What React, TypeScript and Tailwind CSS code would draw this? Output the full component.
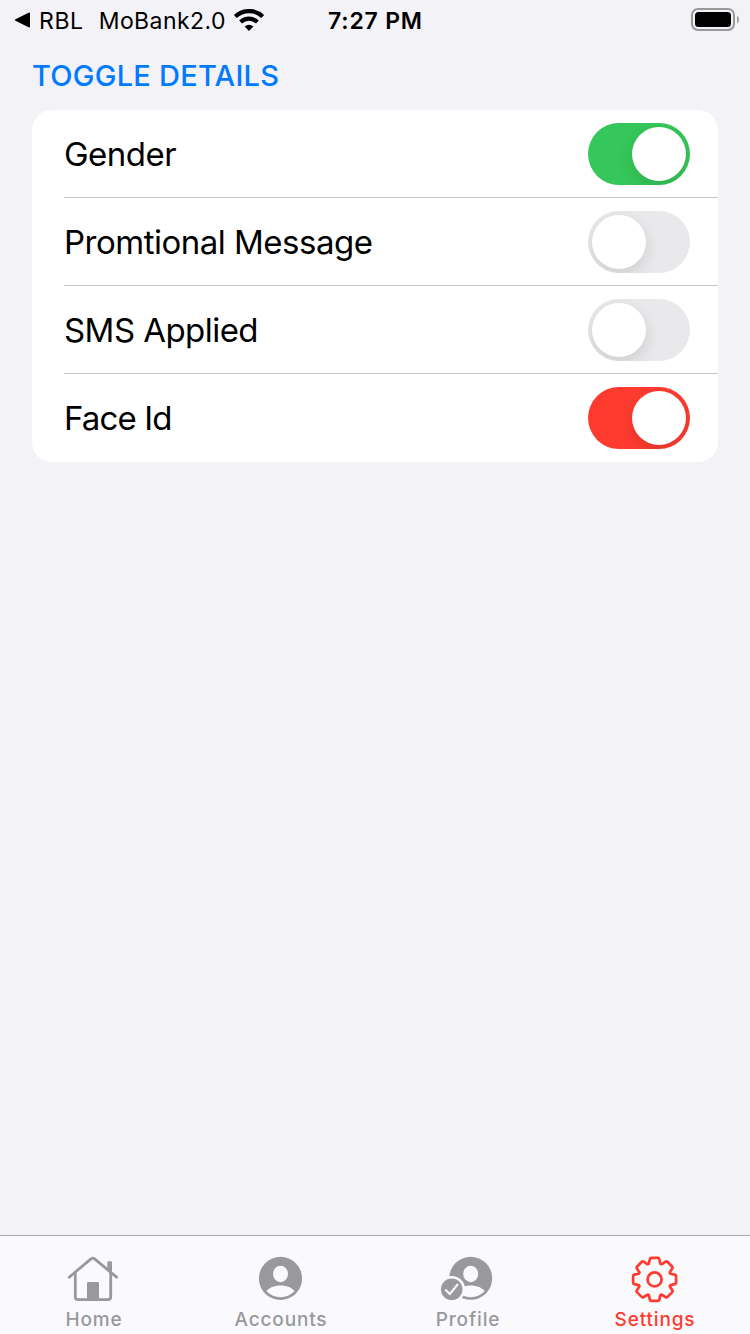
import { useState, type ReactNode } from "react";

type Row = { label: string; on: boolean; onClass: string; spacing: string };

const rows: Row[] = [
  { label: "Gender", on: true, onClass: "bg-[#35c759]", spacing: "tracking-[-0.5px]" },
  { label: "Promtional Message", on: false, onClass: "bg-[#35c759]", spacing: "tracking-[-0.5px]" },
  { label: "SMS Applied", on: false, onClass: "bg-[#35c759]", spacing: "tracking-[-0.55px]" },
  { label: "Face Id", on: true, onClass: "bg-[#ff3b30]", spacing: "tracking-[-0.85px]" },
];

function Toggle({ initial, onClass }: { initial: boolean; onClass: string }) {
  const [on, setOn] = useState(initial);
  return (
    <button
      role="switch"
      aria-checked={on}
      onClick={() => setOn(!on)}
      className={`flex h-[62px] w-[102px] items-center overflow-hidden rounded-full p-1 ${
        on ? `justify-end ${onClass}` : "justify-start bg-[#e9e9eb]"
      }`}
    >
      <span className="size-[54px] rounded-full bg-white shadow-[0_6px_16px_rgba(0,0,0,0.12)]" />
    </button>
  );
}

function HomeIcon() {
  return (
    <svg className="shrink-0" width="61" height="55" viewBox="0 0 61 55" fill="none" stroke="currentColor" strokeLinecap="round" strokeLinejoin="round">
      <path d="M6.2 27.2 28 8.9Q29.8 7.4 31.6 8.9L53.6 27.2" strokeWidth="2.8" />
      <path d="M12.3 23V46.7Q12.3 49.6 15.2 49.6H44.8Q47.7 49.6 47.7 46.7V23" strokeWidth="2.8" />
      <path d="M44.3 19V12.4Q44.3 11.2 45.5 11.2H47.8Q49 11.2 49 12.4V23Z" fill="currentColor" stroke="none" />
      <path d="M24 50V33.2Q24 32 25.2 32H34.8Q36 32 36 33.2V50Z" fill="currentColor" stroke="none" />
    </svg>
  );
}

function AccountsIcon() {
  return (
    <svg className="shrink-0" width="61" height="55" viewBox="0 0 61 55" fill="currentColor">
      <circle cx="30.5" cy="28.4" r="21.6" />
      <ellipse cx="30.5" cy="24" rx="7.5" ry="8.3" fill="#fafafd" />
      <path d="M16.5 41.3C18.7 37.6 24 35.4 30.5 35.4S42.3 37.6 44.5 41.3C40.7 45.2 35.8 47.2 30.5 47.2S20.3 45.2 16.5 41.3Z" fill="#fafafd" />
    </svg>
  );
}

function ProfileIcon() {
  return (
    <svg className="shrink-0" width="61" height="55" viewBox="0 0 61 55" fill="currentColor">
      <circle cx="33.7" cy="28.3" r="21.5" />
      <ellipse cx="33.7" cy="24" rx="7.5" ry="8.3" fill="#fafafd" />
      <path d="M20 41.3C21.9 37.6 27.2 35.4 33.7 35.4S45.5 37.6 47.7 41.3C43.9 45.2 39 47.2 33.7 47.2C30.8 47.2 28.4 46.7 26 45.6Z" fill="#fafafd" />
      <circle cx="14.7" cy="39.3" r="13.4" fill="#fafafd" />
      <circle cx="14.7" cy="39.3" r="10.8" />
      <path d="M9 40.2 12.8 44.1 20.4 34.6" fill="none" stroke="#fafafd" strokeWidth="2.2" strokeLinecap="round" strokeLinejoin="round" />
    </svg>
  );
}

const toothPoints = [
  [-5.7, -15.7],
  [-4.5, -21.5],
  [4.5, -21.5],
  [5.7, -15.7],
];

const gearCorners = Array.from({ length: 8 }, (_, i) => {
  const a = (i * Math.PI) / 4;
  return toothPoints.map(([x, y]) => [x * Math.cos(a) - y * Math.sin(a), x * Math.sin(a) + y * Math.cos(a)]);
}).flat();

// Rounds each corner by starting and ending a quadratic curve a short way along its edges.
const gearPath =
  gearCorners
    .map((p, i) => {
      const n = gearCorners.length;
      const toward = (q: number[]) => {
        const d = Math.hypot(q[0] - p[0], q[1] - p[1]);
        return `${(p[0] + ((q[0] - p[0]) * 1.3) / d).toFixed(2)} ${(p[1] + ((q[1] - p[1]) * 1.3) / d).toFixed(2)}`;
      };
      const start = toward(gearCorners[(i + n - 1) % n]);
      const end = toward(gearCorners[(i + 1) % n]);
      return `${i === 0 ? "M" : "L"}${start}Q${p[0].toFixed(2)} ${p[1].toFixed(2)} ${end}`;
    })
    .join("") + "Z";

function GearIcon() {
  return (
    <svg className="shrink-0" width="61" height="55" viewBox="-30.6 -29.4 61 55" fill="none" stroke="currentColor" strokeWidth="2.7" strokeLinejoin="round">
      <path d={gearPath} />
      <circle r="7" />
    </svg>
  );
}

const tabs: { label: string; icon: ReactNode; color: string }[] = [
  { label: "Home", icon: <HomeIcon />, color: "text-[#98989d]" },
  { label: "Accounts", icon: <AccountsIcon />, color: "text-[#98989d]" },
  { label: "Profile", icon: <ProfileIcon />, color: "text-[#98989d]" },
  { label: "Settings", icon: <GearIcon />, color: "text-[#ff3b30]" },
];

function StatusBar() {
  return (
    <header className="grid h-10 grid-cols-[328px_1fr_auto] items-center text-black">
      <div className="flex items-center pl-[14px]">
        <svg width="17" height="16" viewBox="0 0 17 16">
          <path d="M1.5 7.2 14.5.7Q16 .2 16 1.6V14.4Q16 15.8 14.5 15.3L1.5 8.8Q0 8 1.5 7.2Z" />
        </svg>
        <span className="ml-2 pt-0.5 text-[23px] tracking-[0.6px]">RBL</span>
        <span className="ml-[15px] pt-0.5 text-[23px] tracking-[0.45px]">MoBank2.0</span>
        <svg className="ml-2" width="30" height="22" viewBox="0 0 30 22" fill="none" stroke="black">
          <path d="M1.4 7.6C9 .2 21 .2 28.6 7.6" strokeWidth="4.2" />
          <path d="M6.6 13.1C11.4 8.5 18.6 8.5 23.4 13.1" strokeWidth="4.2" />
          <path d="M15 22 10.6 17.6Q15 14 19.4 17.6Z" fill="black" stroke="none" />
        </svg>
      </div>
      <span className="pt-0.5 text-[23px] font-semibold tracking-[0.8px]">7:27 PM</span>
      <svg className="mr-[10px]" width="49" height="24" viewBox="0 0 49 24">
        <rect x="1" y="1" width="42" height="21" rx="6" fill="none" stroke="#98989b" strokeWidth="2" />
        <rect x="4" y="4" width="36" height="15" rx="3.5" />
        <path d="M46 7.5Q48 9 48 11.5T46 15.5Z" fill="#98989b" />
      </svg>
    </header>
  );
}

export default function App() {
  return (
    <div className="flex h-[1334px] w-[750px] flex-col bg-[#f2f2f7] font-['Inter','Liberation_Sans',sans-serif]">
      <StatusBar />
      <main className="flex-1 px-8">
        <h1 className="flex h-[70px] items-center pt-0.5 text-[29px] font-medium tracking-[0.25px] text-[#007aff]">TOGGLE DETAILS</h1>
        <ul className="overflow-hidden rounded-[20px] bg-white pl-8">
          {rows.map((r) => (
            <li key={r.label} className="flex h-[88px] items-center justify-between border-b border-[#c6c6c8] pr-7 last:border-b-0">
              <span className={`pt-0.5 text-[33px] text-black ${r.spacing}`}>{r.label}</span>
              <Toggle initial={r.on} onClass={r.onClass} />
            </li>
          ))}
        </ul>
      </main>
      <nav className="flex h-[99px] border-t border-[#a9a9ae] bg-[#fafafd]">
        {tabs.map((t) => (
          <button key={t.label} className={`flex w-[187px] flex-col items-center pt-[14px] ${t.color}`}>
            {t.icon}
            <span className="pt-px pl-px text-[19px] leading-7 font-medium tracking-[0.85px]">{t.label}</span>
          </button>
        ))}
      </nav>
    </div>
  );
}
